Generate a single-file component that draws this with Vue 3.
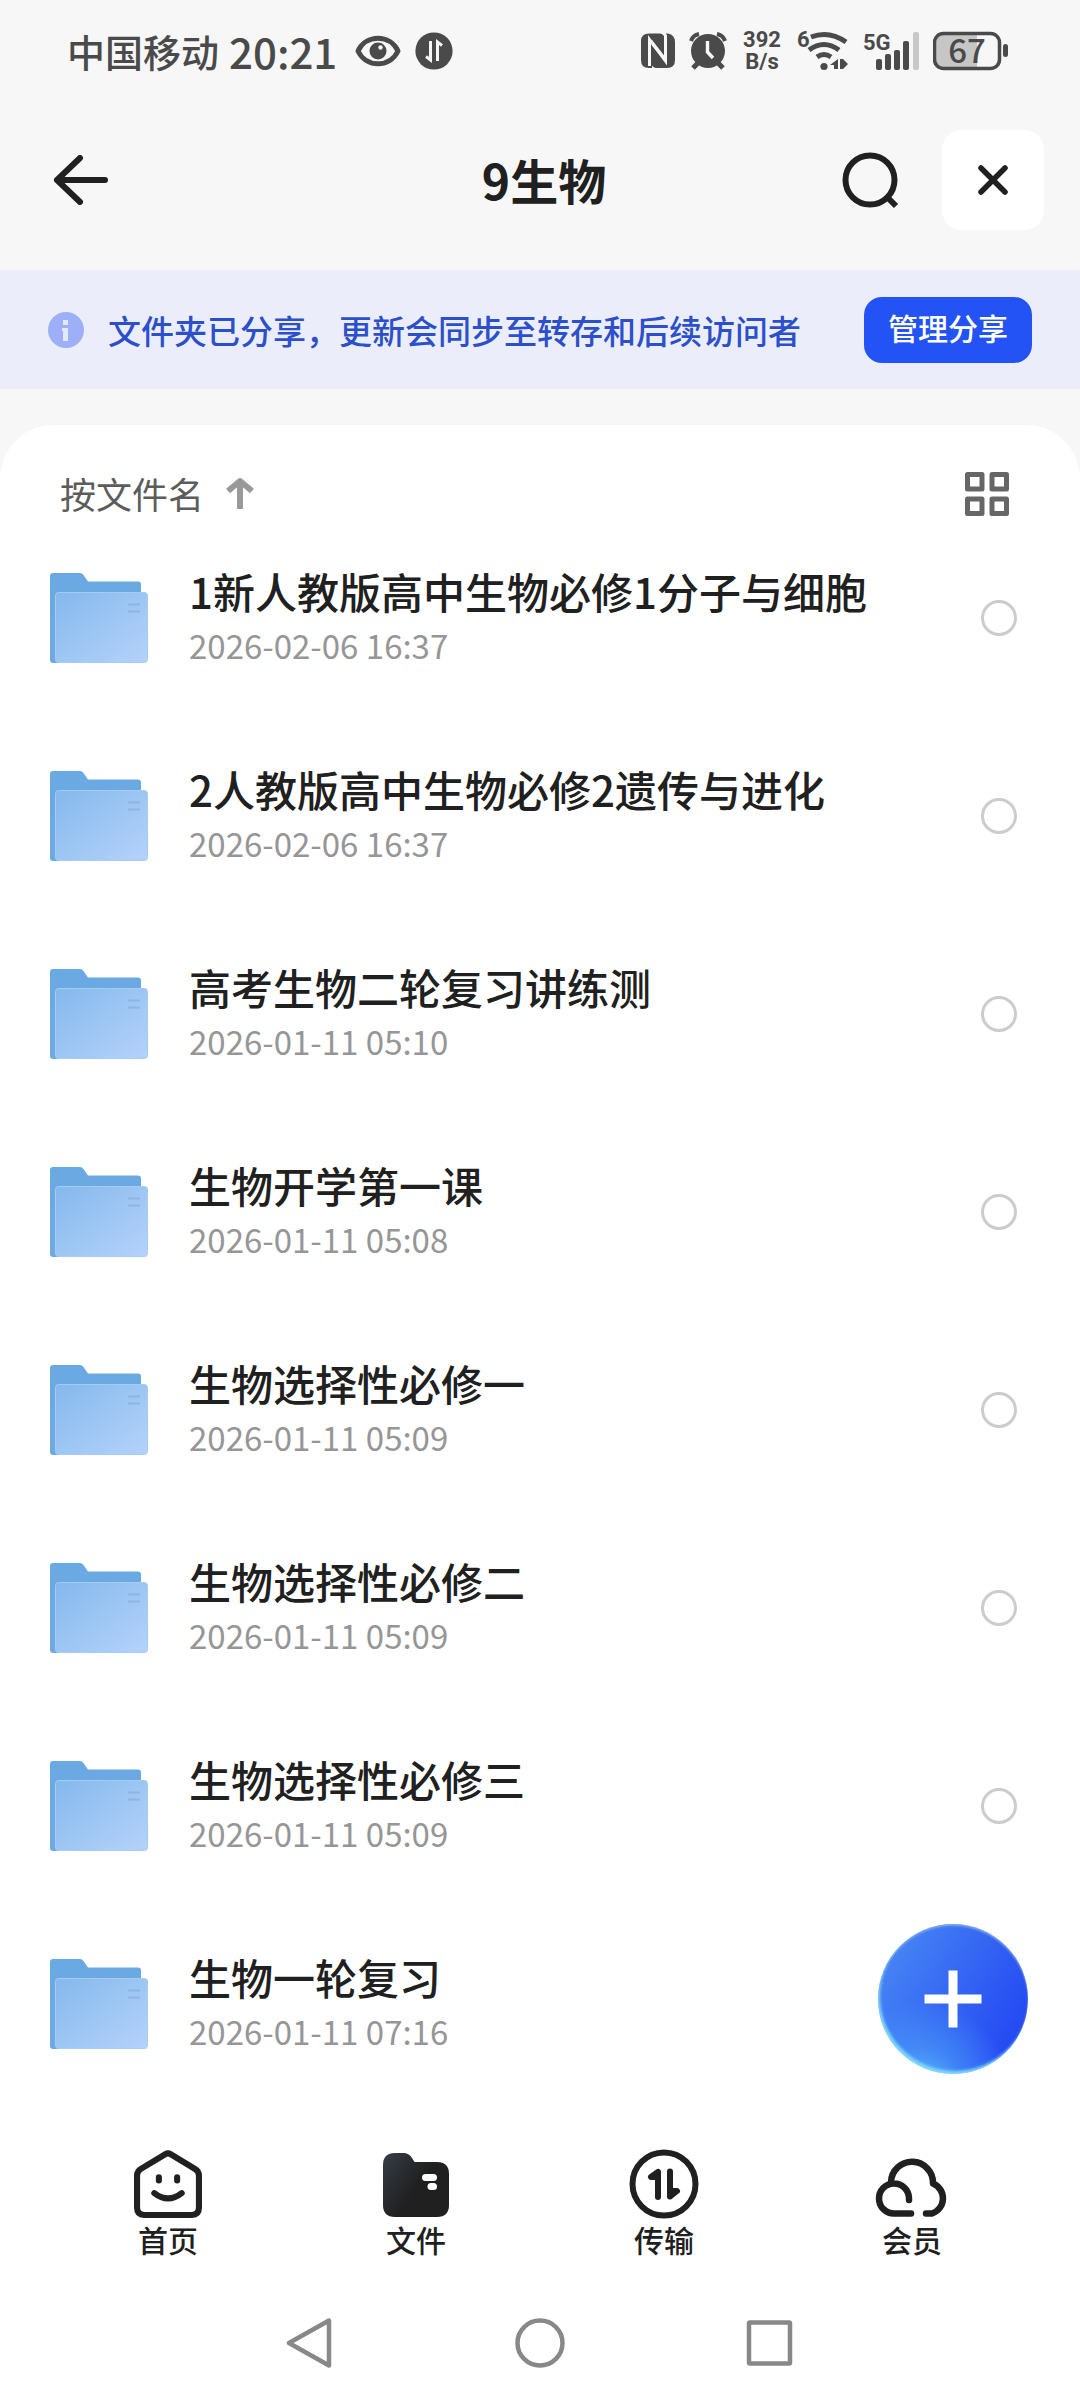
<script setup>
import { ref } from 'vue'

const files = ref([
  { name: '1新人教版高中生物必修1分子与细胞', time: '2026-02-06 16:37', checked: false },
  { name: '2人教版高中生物必修2遗传与进化', time: '2026-02-06 16:37', checked: false },
  { name: '高考生物二轮复习讲练测', time: '2026-01-11 05:10', checked: false },
  { name: '生物开学第一课', time: '2026-01-11 05:08', checked: false },
  { name: '生物选择性必修一', time: '2026-01-11 05:09', checked: false },
  { name: '生物选择性必修二', time: '2026-01-11 05:09', checked: false },
  { name: '生物选择性必修三', time: '2026-01-11 05:09', checked: false },
  { name: '生物一轮复习', time: '2026-01-11 07:16', checked: false },
])
</script>

<template>
  <div class="page">
    <div class="status">
      <div class="status-left">
        <span class="carrier">中国移动</span>
        <span class="clock">20:21</span>
        <svg class="eye" width="46" height="32" viewBox="0 0 46 32">
          <path d="M3 16C11 -1 35 -1 43 16C35 33 11 33 3 16Z" fill="none" stroke="#4a4a4a" stroke-width="5" stroke-linejoin="round" />
          <circle cx="23" cy="16" r="8.5" fill="#4a4a4a" />
          <circle cx="25.5" cy="12.5" r="2.2" fill="#f7f7f7" />
        </svg>
        <svg width="38" height="38" viewBox="0 0 38 38">
          <circle cx="19" cy="19" r="18.6" fill="#4a4a4a" />
          <path d="M15.5 9V28L11 24.5M22.5 29V10L27 13.5" fill="none" stroke="#f7f7f7" stroke-width="3" />
        </svg>
      </div>
      <div class="status-right">
        <svg width="34" height="36" viewBox="0 0 34 36">
          <path d="M8 0.5H19Q23 1 23.5 5V23L11 7V35H8Q0 35 0 27V8Q0 0.5 8 0.5Z" fill="#4a4a4a" />
          <path d="M25 0.5H27Q34 2 34 9V27Q34 35 26 35H15Q11 34 10.5 31V12L26 30V7Q26 2 25 0.5Z" fill="#4a4a4a" />
          <path d="M8.5 33V6.5L24.5 28V2" fill="none" stroke="#f7f7f7" stroke-width="3" />
        </svg>
        <svg width="38" height="38" viewBox="0 0 38 38">
          <circle cx="19" cy="19" r="17" fill="#4a4a4a" />
          <path d="M2 9Q4 3 10 2M36 9Q34 3 28 2" fill="none" stroke="#4a4a4a" stroke-width="4" />
          <path d="M9 31L4 36M29 31L34 36" stroke="#4a4a4a" stroke-width="5" />
          <path d="M18.5 9V20L24 26" fill="none" stroke="#f7f7f7" stroke-width="3.4" />
        </svg>
        <div class="speed"><span>392</span><span>B/s</span></div>
        <svg width="52" height="58" viewBox="0 -8 52 58">
          <text x="0" y="17" class="net-text">6</text>
          <g fill="none" stroke="#4a4a4a" stroke-width="5">
            <path d="M14 7Q32 0 49 12" />
            <path d="M12 20Q27 9 42 20" />
            <path d="M20 27Q27 22 34 27" />
          </g>
          <circle cx="27" cy="36.5" r="3.6" fill="#4a4a4a" />
          <path d="M41 29V39H37V35H33Z M43 29H46L51 34L46 39H43Z" fill="#4a4a4a" />
        </svg>
        <svg width="56" height="58" viewBox="0 -10 56 58">
          <text x="0" y="18" class="net-text">5G</text>
          <g fill="#4a4a4a">
            <rect x="13" y="27" width="6" height="11" rx="2" />
            <rect x="22" y="22" width="6" height="16" rx="2" />
            <rect x="31" y="18" width="6" height="20" rx="2" />
            <rect x="40" y="9" width="6" height="29" rx="2" />
          </g>
          <rect x="50" y="0" width="6" height="38" rx="2" fill="#c8c8c8" />
        </svg>
        <svg width="76" height="58" viewBox="0 -10 76 58">
          <path d="M10 2H44V36H10Q2 36 2 28V10Q2 2 10 2Z" fill="#c6c6c6" />
          <rect x="1.5" y="1.5" width="65" height="35" rx="9" fill="none" stroke="#4a4a4a" stroke-width="3.5" />
          <rect x="70" y="12" width="5" height="13" rx="2.5" fill="#4a4a4a" />
          <text x="34" y="31" text-anchor="middle" class="battery-text">67</text>
        </svg>
      </div>
    </div>

    <header class="header">
      <button class="plain back" aria-label="返回">
        <svg width="56" height="50" viewBox="0 0 56 50">
          <path d="M27 3L4 25L27 47M4 25H52" fill="none" stroke="#202020" stroke-width="6" stroke-linecap="round" stroke-linejoin="round" />
        </svg>
      </button>
      <h1>9生物</h1>
      <div class="header-actions">
        <button class="plain" aria-label="搜索">
          <svg width="58" height="58" viewBox="0 0 58 58">
            <circle cx="28" cy="29" r="24.5" fill="none" stroke="#202020" stroke-width="6" />
            <path d="M45 46L54 55" stroke="#202020" stroke-width="6" />
          </svg>
        </button>
        <button class="close" aria-label="关闭">
          <svg width="32" height="32" viewBox="0 0 32 32">
            <path d="M4 4L28 28M28 4L4 28" stroke="#202020" stroke-width="5.5" stroke-linecap="round" />
          </svg>
        </button>
      </div>
    </header>

    <div class="banner">
      <svg width="36" height="36" viewBox="0 0 36 36">
        <circle cx="18" cy="18" r="18" fill="#9daff7" />
        <path d="M15 8H20V13H15ZM14 16H20V29H15V19H14Z" fill="#e3e9fd" />
      </svg>
      <p>文件夹已分享，更新会同步至转存和后续访问者</p>
      <button class="manage">管理分享</button>
    </div>

    <main class="card">
      <div class="sort-bar">
        <button class="plain sort">
          按文件名
          <svg width="30" height="32" viewBox="0 0 30 32">
            <path d="M3 14L15 4L27 14M15 4V32" fill="none" stroke="#999" stroke-width="6" stroke-linejoin="round" />
          </svg>
        </button>
        <button class="plain" aria-label="网格视图">
          <svg width="44" height="44" viewBox="0 0 44 44">
            <g fill="none" stroke="#666" stroke-width="5" stroke-linejoin="round">
              <rect x="2.5" y="2.5" width="14.5" height="14.5" />
              <rect x="27" y="2.5" width="14.5" height="14.5" />
              <rect x="2.5" y="27" width="14.5" height="14.5" />
              <rect x="27" y="27" width="14.5" height="14.5" />
            </g>
          </svg>
        </button>
      </div>

      <svg class="defs" width="0" height="0" aria-hidden="true">
        <defs>
          <linearGradient id="folder-back" x1="0" y1="0" x2="0" y2="1">
            <stop offset="0" stop-color="#6aa9e3" />
            <stop offset="1" stop-color="#6fa9e2" />
          </linearGradient>
          <linearGradient id="folder-front" x1="0" y1="0" x2="1" y2="1">
            <stop offset="0" stop-color="#84b8ed" />
            <stop offset="0.5" stop-color="#9dc6f3" />
            <stop offset="1" stop-color="#b5d2fa" />
          </linearGradient>
        </defs>
      </svg>

      <ul class="files">
        <li v-for="(file, i) in files" :key="file.name">
          <svg width="98" height="92" viewBox="0 0 98 92">
            <path d="M3 1H30Q32 1 33.5 3L38 9.5H88Q91 9.5 91 12.5V91H3Q0 91 0 88V4Q0 1 3 1Z" fill="url(#folder-back)" />
            <rect x="5.5" y="20.5" width="92" height="70" rx="3" fill="url(#folder-front)" stroke="#a5cdf4" stroke-width="1" />
            <path d="M78 32.5H90M78 39.5H90" stroke="#8fb5e2" stroke-width="2" />
          </svg>
          <label class="info" :for="'file-' + i">
            <span class="name">{{ file.name }}</span>
            <time class="time">{{ file.time }}</time>
          </label>
          <input :id="'file-' + i" v-model="file.checked" type="checkbox" />
        </li>
      </ul>

      <button class="fab" aria-label="新建">
        <svg width="58" height="58" viewBox="0 0 58 58">
          <path d="M29 0.5V57.5M0.5 29H57.5" stroke="#fff" stroke-width="9" />
        </svg>
      </button>
    </main>

    <nav class="tabs">
      <a href="#home">
        <svg width="68" height="70" viewBox="0 0 67 69">
          <g transform="translate(0 1)" fill="none" stroke="#202020" stroke-width="6" stroke-linecap="round" stroke-linejoin="round">
            <path d="M36 4L60 18.5Q64 21 64 25V57Q64 64 57 64H10Q3 64 3 57V25Q3 21 7 18.5L31 4Q33.5 2.5 36 4Z" />
            <path d="M24.5 27V30M42.5 27V30M20 42.5Q33.5 53 47 42.5" />
          </g>
        </svg>
        首页
      </a>
      <a href="#files">
        <svg width="66" height="70" viewBox="0 0 66 70">
          <defs>
            <linearGradient id="tab-folder" x1="0" y1="0" x2="0.6" y2="0.4">
              <stop offset="0" stop-color="#353d47" />
              <stop offset="1" stop-color="#202020" />
            </linearGradient>
          </defs>
          <path d="M12 4H20Q26 4 29 9L31.5 13H54Q66 13 66 25V56Q66 68 54 68H12Q0 68 0 56V16Q0 4 12 4Z" fill="url(#tab-folder)" />
          <rect x="39" y="25" width="15" height="7" rx="3.5" fill="#fff" />
          <rect x="44.5" y="34" width="9.5" height="7" rx="3.5" fill="#fff" />
        </svg>
        文件
      </a>
      <a href="#transfer">
        <svg width="70" height="70" viewBox="0 0 70 70">
          <circle cx="35" cy="35" r="31.5" fill="none" stroke="#202020" stroke-width="6" />
          <path d="M29 23V48M29 23L22 28H29M41 22.500V47.500M41 47.500L48 42H41" fill="none" stroke="#202020" stroke-width="6" stroke-linecap="round" stroke-linejoin="round" />
        </svg>
        传输
      </a>
      <a href="#vip">
        <svg width="74" height="70" viewBox="0 0 74 70">
          <path d="M36 64.5H19A15 15 0 1 1 34 49V51M16 33A21 21 0 1 1 58 34.5A16 16 0 0 1 57 64.5H51" fill="none" stroke="#202020" stroke-width="6.5" stroke-linecap="round" stroke-linejoin="round" />
        </svg>
        会员
      </a>
    </nav>

    <div class="system-nav">
      <button class="plain" aria-label="后退">
        <svg width="50" height="50" viewBox="0 0 50 50">
          <path d="M44 2.5V47.5L4 25Z" fill="none" stroke="#888" stroke-width="4.5" stroke-linejoin="round" />
        </svg>
      </button>
      <button class="plain" aria-label="主屏幕">
        <svg width="50" height="50" viewBox="0 0 50 50">
          <circle cx="25" cy="25" r="22.5" fill="none" stroke="#888" stroke-width="4.5" />
        </svg>
      </button>
      <button class="plain" aria-label="最近任务">
        <svg width="50" height="50" viewBox="0 0 50 50">
          <rect x="4" y="4.5" width="41" height="41" rx="1" fill="none" stroke="#888" stroke-width="4.5" />
        </svg>
      </button>
    </div>
  </div>
</template>

<style>
body {
  background: #fff;
}
</style>

<style scoped>
.page {
  min-height: 100vh;
  display: flex;
  flex-direction: column;
  background: #f7f7f7;
  color: #202020;
  font-family: "Noto Sans CJK SC", sans-serif;
  font-weight: 500;
}

svg {
  display: block;
  flex: none;
}

button {
  font: inherit;
  color: inherit;
  border: 0;
  padding: 0;
  cursor: pointer;
}

.plain {
  background: none;
}

.status {
  height: 102px;
  display: flex;
  align-items: center;
  justify-content: space-between;
  padding: 0 71px 0 67px;
  color: #4a4a4a;
}

.status-left,
.status-right {
  display: flex;
  align-items: center;
}

.carrier {
  font-size: 38px;
  line-height: 48px;
}

.clock {
  margin-left: 10px;
  font-size: 42px;
  line-height: 48px;
}

.eye {
  margin: 0 14px 0 18px;
}

.status-right {
  gap: 14px;
}

.speed {
  width: 42px;
  display: flex;
  flex-direction: column;
  align-items: center;
  font-family: Roboto, sans-serif;
  font-size: 22px;
  line-height: 22px;
  font-weight: 700;
}

.net-text {
  font-family: Roboto, sans-serif;
  font-size: 22px;
  font-weight: 700;
  fill: #4a4a4a;
}

.battery-text {
  font-size: 33px;
  fill: #4a4a4a;
}

.header {
  display: grid;
  grid-template-columns: 1fr auto 1fr;
  align-items: center;
  padding: 28px 36px 40px 44px;
}

.back {
  justify-self: start;
  margin-left: 9px;
}

h1 {
  margin: 0;
  padding-bottom: 2px;
  font-size: 48px;
  line-height: 60px;
  font-weight: 700;
}

.header-actions {
  display: flex;
  align-items: center;
  justify-content: flex-end;
  gap: 42px;
}

.close {
  width: 102px;
  height: 100px;
  display: flex;
  align-items: center;
  justify-content: center;
  border-radius: 20px;
  background: #fff;
}

.banner {
  min-height: 119px;
  display: flex;
  align-items: center;
  padding: 0 48px;
  background: #ebeefa;
}

.banner p {
  flex: 1;
  margin: 0 0 0 24px;
  font-size: 33px;
  line-height: 48px;
  color: #2c50cc;
}

.manage {
  width: 168px;
  height: 66px;
  padding-bottom: 6px;
  border-radius: 18px;
  background: #2453f5;
  color: #fff;
  font-size: 30px;
  line-height: 40px;
}

.card {
  position: relative;
  flex: 1;
  margin-top: 36px;
  border-radius: 54px 54px 0 0;
  background: #fff;
}

.sort-bar {
  display: flex;
  align-items: center;
  justify-content: space-between;
  padding: 44px 71px 0 60px;
}

.sort {
  display: flex;
  align-items: center;
  gap: 21px;
  padding-bottom: 2px;
  font-size: 36px;
  line-height: 48px;
  font-weight: 400;
  color: #5c5c5c;
}

.defs {
  position: absolute;
}

.files {
  list-style: none;
  margin: 0;
  padding: 0;
}

.files li {
  height: 198px;
  display: flex;
  align-items: center;
  padding: 0 63px 0 50px;
}

.info {
  flex: 1;
  display: flex;
  flex-direction: column;
  margin-left: 41px;
  padding-bottom: 6px;
}

.name {
  font-size: 42px;
  line-height: 60px;
}

.time {
  font-size: 33px;
  line-height: 48px;
  font-weight: 400;
  color: #969696;
}

.files input {
  appearance: none;
  width: 36px;
  height: 36px;
  margin: 0;
  border: 3px solid #ccc;
  border-radius: 50%;
}

.files input:checked {
  border-color: #2453f5;
  background: #2453f5;
}

.fab {
  position: absolute;
  right: 52px;
  bottom: 29px;
  width: 150px;
  height: 150px;
  display: flex;
  align-items: center;
  justify-content: center;
  border-radius: 50%;
  background:
    radial-gradient(circle at 28% 112%, #5cc4fa 0, rgba(76, 160, 248, 0.6) 22%, rgba(60, 120, 245, 0) 46%),
    linear-gradient(120deg, #4a8af4 5%, #3465f3 50%, #2246f2 90%);
  box-shadow: inset 0 2px 2px #7aa4ee, inset 2px -3px 3px #7fd8fb;
}

.tabs {
  display: flex;
  padding: 46px 44px 27px;
  background: #fff;
}

.tabs a {
  flex: 1;
  display: flex;
  flex-direction: column;
  align-items: center;
  color: inherit;
  font-size: 30px;
  line-height: 40px;
  text-decoration: none;
}

.system-nav {
  height: 114px;
  display: flex;
  align-items: center;
  justify-content: center;
  gap: 180px;
  background: #fff;
}
</style>
